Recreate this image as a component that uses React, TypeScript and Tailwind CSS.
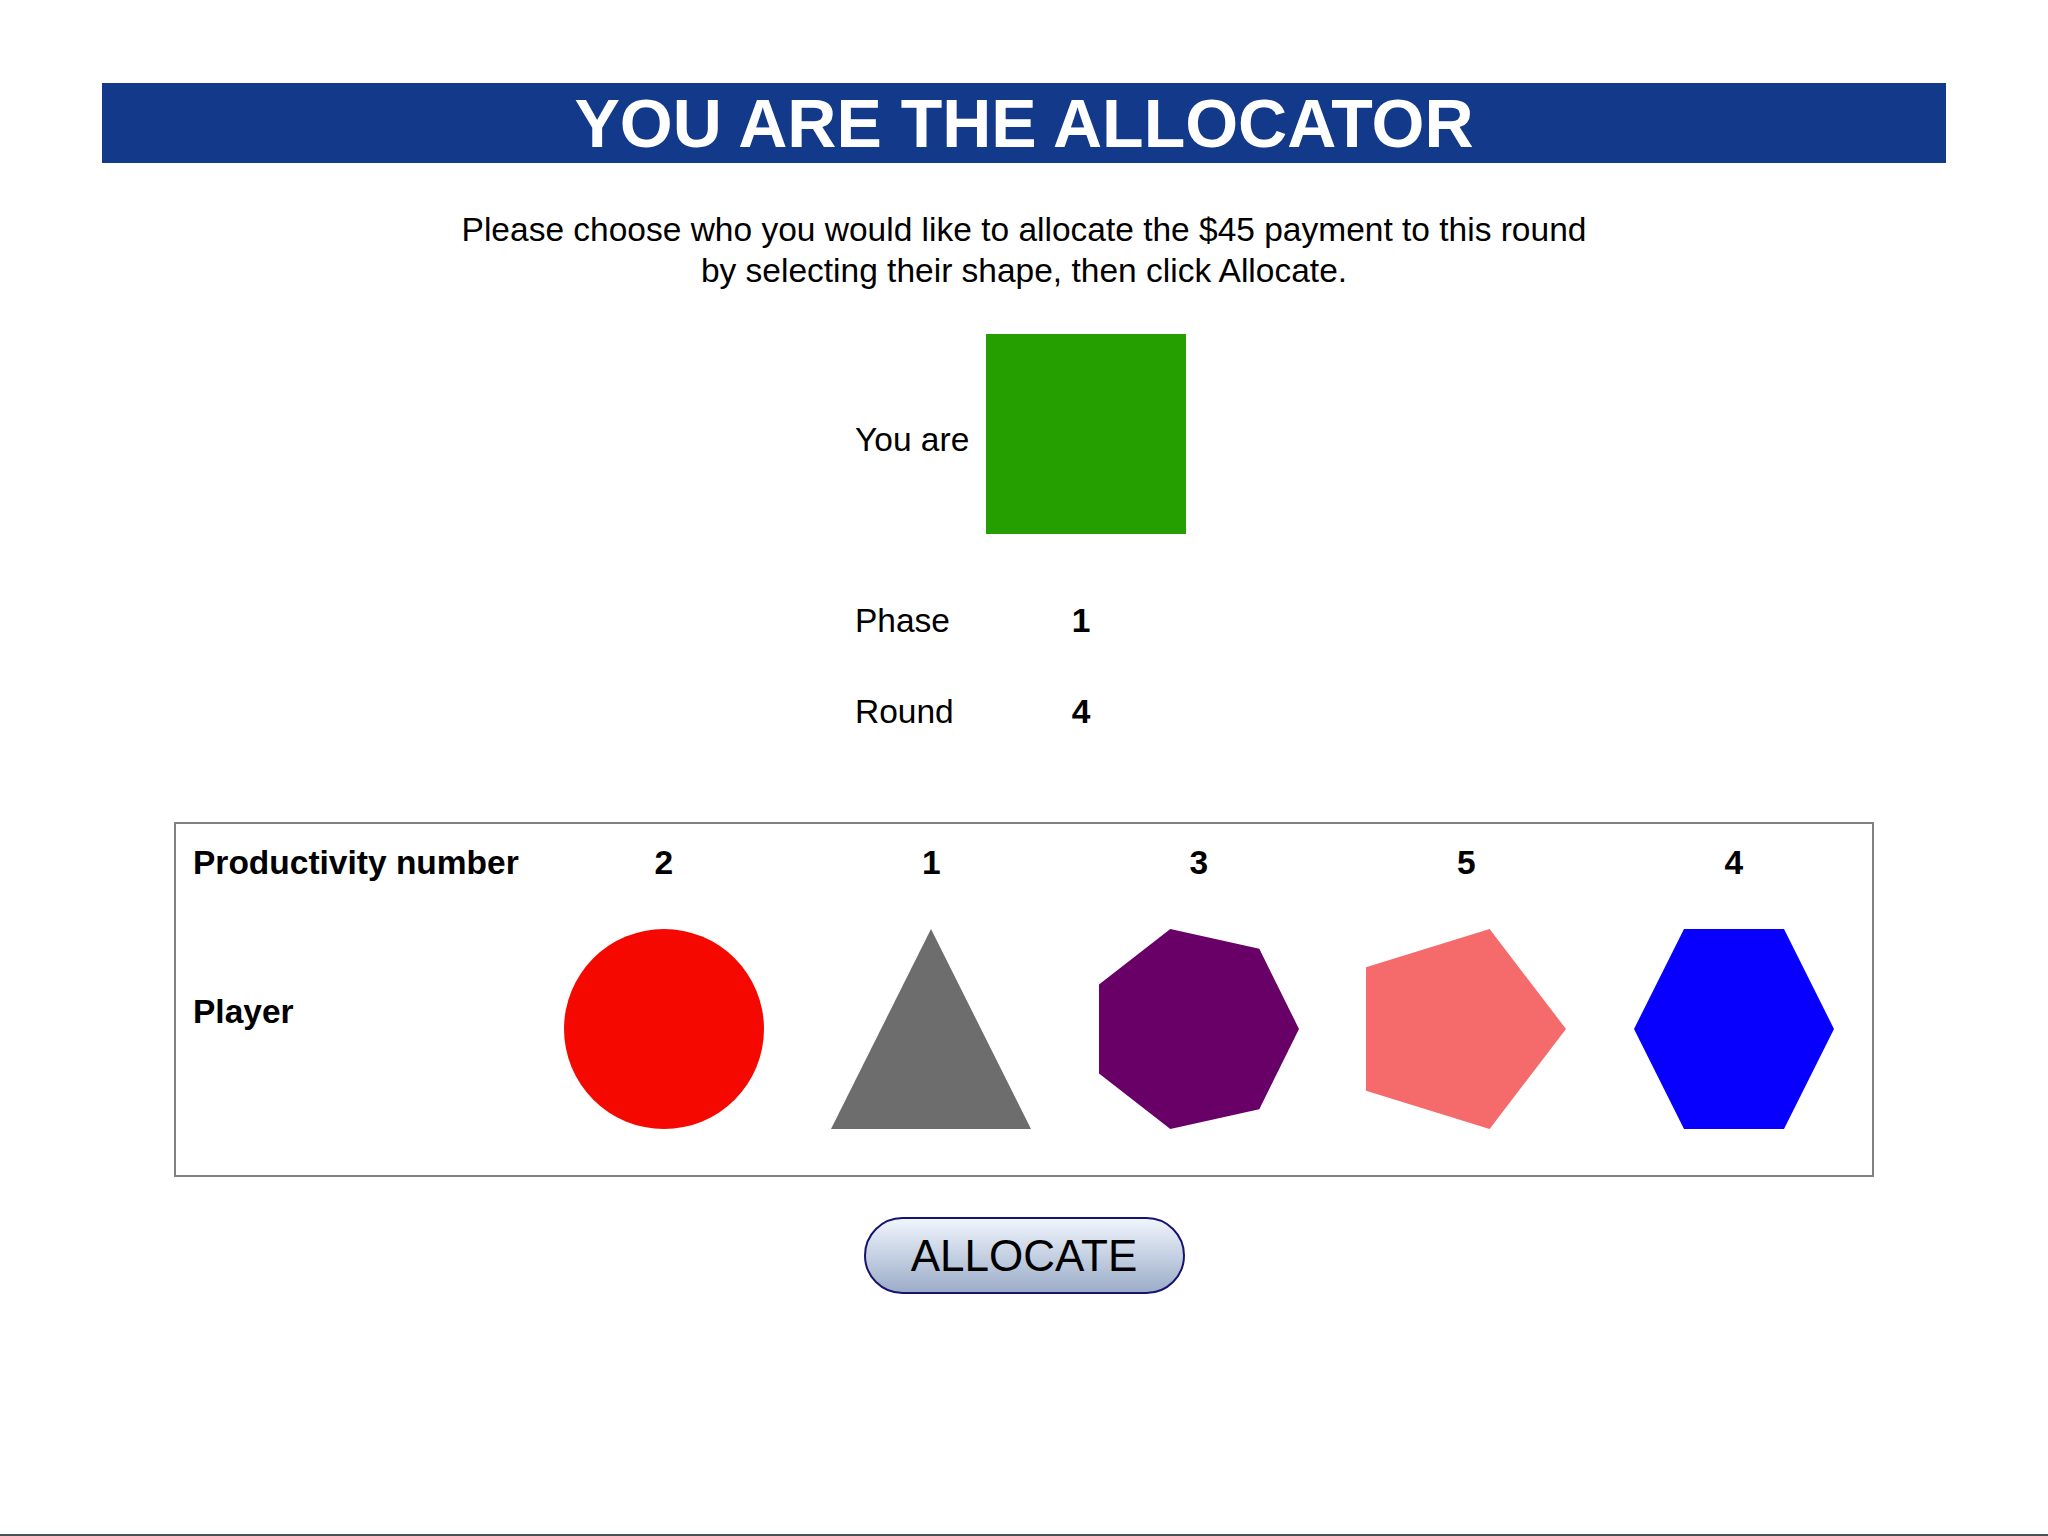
import React from "react";

type Player = {
  productivity: number;
  shape: "circle" | "triangle" | "heptagon" | "pentagon" | "hexagon";
  color: string;
};

const players: Player[] = [
  { productivity: 2, shape: "circle", color: "#f50800" },
  { productivity: 1, shape: "triangle", color: "#6d6d6d" },
  { productivity: 3, shape: "heptagon", color: "#680068" },
  { productivity: 5, shape: "pentagon", color: "#f56b6c" },
  { productivity: 4, shape: "hexagon", color: "#0800ff" },
];

const polygons: Record<string, string> = {
  triangle: "0,200 100,0 200,200",
  heptagon: "200,100 160.3,180.2 71.3,200 0,144.5 0,55.5 71.3,0 160.3,19.8",
  pentagon: "200,100 123.6,200 0,161.8 0,38.2 123.6,0",
  hexagon: "200,100 150,200 50,200 0,100 50,0 150,0",
};

function Shape({ player }: { player: Player }) {
  return (
    <svg width="200" height="200" viewBox="0 0 200 200" className="block">
      {player.shape === "circle" ? (
        <circle cx="100" cy="100" r="100" fill={player.color} />
      ) : (
        <polygon points={polygons[player.shape]} fill={player.color} />
      )}
    </svg>
  );
}

export default function App() {
  return (
    <div className="flex h-[1536px] w-full flex-col border-b-2 border-[#4b5157] bg-white font-['Liberation_Sans',Arial,sans-serif] text-black">
      {/* Banner */}
      <div className="mx-[102px] mt-[83px] h-[80px] bg-[#12398a] text-center text-[68px] font-bold leading-[80px] text-white">
        YOU ARE THE ALLOCATOR
      </div>

      <p className="mt-[46px] text-center text-[33.5px] leading-[41px]">
        Please choose who you would like to allocate the $45 payment to this round
        <br />
        by selecting their shape, then click Allocate.
      </p>

      {/* Own shape and round info */}
      <div className="mx-auto mt-[43px] grid grid-cols-[131px_200px] pr-[7px] text-[33.5px] leading-[38px]">
        <div className="flex items-center pt-[12px]">You are</div>
        <div className="h-[200px] w-[200px] bg-[#259f00]" />

        <div className="mt-[68px]">Phase</div>
        <div className="mt-[68px] pr-[10px] text-center font-bold">1</div>

        <div className="mt-[53px]">Round</div>
        <div className="mt-[53px] pr-[10px] text-center font-bold">4</div>
      </div>

      {/* Players table */}
      <div className="mx-auto mt-[91px] w-[1700px] border-2 border-[#808080] pb-[46px] pl-[17px] pt-[20px] text-[33.5px] font-bold leading-[38px]">
        <div className="grid grid-cols-[337px_repeat(5,267.5px)]">
          <div>Productivity number</div>
          {players.map((p) => (
            <div key={p.shape} className="text-center">
              {p.productivity}
            </div>
          ))}

          <div className="mt-[111px]">Player</div>
          {players.map((p) => (
            <div key={p.shape} className="mt-[47px] flex justify-center">
              <Shape player={p} />
            </div>
          ))}
        </div>
      </div>

      <button className="mx-auto mt-[40px] flex h-[77px] w-[321px] items-center justify-center rounded-full border-2 border-[#16146f] bg-linear-to-b from-[#f0f5fc] to-[#9cadc9] text-[44px] leading-none text-black">
        ALLOCATE
      </button>
    </div>
  );
}
